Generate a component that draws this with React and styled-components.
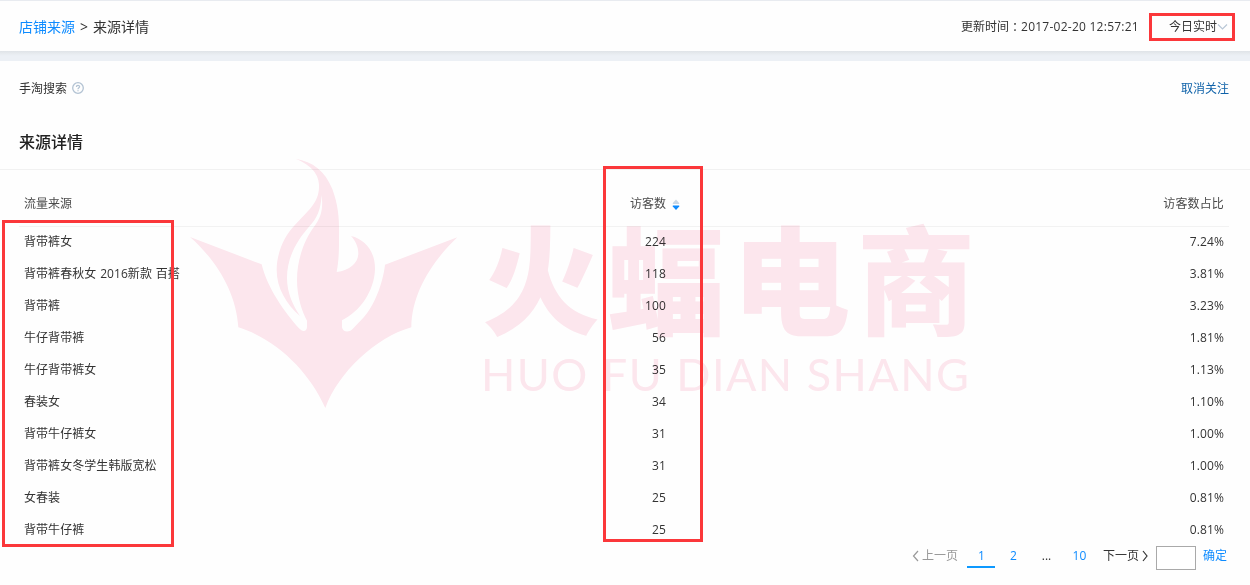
import React from "react";
import styled, { createGlobalStyle } from "styled-components";

const GlobalStyle = createGlobalStyle`
  * { box-sizing: border-box; }
  body {
    margin: 0;
    background: #fefefe;
    color: #333;
    font-family: "Open Sans", "Noto Sans CJK SC", sans-serif;
    font-size: 12px;
    line-height: 18px;
  }
`;

const Page = styled.div`
  position: relative;
  width: 1250px;
  height: 585px;
  overflow: hidden;
  background: #fefefe;
`;

const Header = styled.header`
  display: flex;
  align-items: center;
  justify-content: space-between;
  height: 51px;
  padding: 1px 22px 0 19px;
  border-top: 1px solid #e8ebf0;
`;

const Breadcrumb = styled.nav`
  display: flex;
  gap: 5px;
  font-size: 14px;
  line-height: 20px;
`;

const CrumbLink = styled.a`
  color: #0d8bff;
`;

const HeaderTools = styled.div`
  display: flex;
  align-items: center;
`;

const UpdateTime = styled.span`
  display: flex;
  margin-right: 30px;
`;

const Colon = styled.span`
  font-family: "Noto Sans CJK TC", sans-serif;
`;

const Timestamp = styled.time`
  letter-spacing: 0.25px;
`;

const RangeSelect = styled.span`
  display: flex;
  align-items: center;
`;

const Divider = styled.div`
  height: 10px;
  background: linear-gradient(#dfe3e7 0, #e8ecf0 3px, #ecf0f5 5px);
`;

const SourceBar = styled.div`
  display: flex;
  align-items: center;
  justify-content: space-between;
  height: 54px;
  padding: 2px 21px 0 19px;
`;

const SourceName = styled.span`
  display: flex;
  align-items: center;
  gap: 5px;
`;

const HelpMark = styled.svg`
  margin-bottom: 2px;
`;

const Unfollow = styled.a`
  color: #0f62a9;
`;

const SectionTitle = styled.h2`
  height: 55px;
  margin: 0;
  padding: 15px 19px 0;
  border-bottom: 1px solid #f1f1f1;
  color: #222;
  font-size: 16px;
  font-weight: 500;
  line-height: 24px;
`;

const Table = styled.div`
  padding: 0 21px 0 19px;
`;

const Row = styled.div`
  display: grid;
  grid-template-columns: 560px 92px 1fr;
  align-items: start;
  height: 32px;
  line-height: 30px;
`;

const HeadRow = styled(Row)`
  height: 57px;
  padding-top: 19px;
  border-bottom: 1px solid #f2f2f2;
  color: #4a4a4a;
`;

const Cell = styled.div`
  padding: 0 5px;
  white-space: nowrap;
  text-align: ${(p) => (p.$numeric ? "right" : "left")};
  letter-spacing: ${(p) => (p.$numeric ? "0.14px" : "normal")};
`;

const NameCell = styled(Cell)`
  word-spacing: 0.6px;
  letter-spacing: 0.06px;
`;

const SortHead = styled(Cell)`
  display: flex;
  align-items: center;
  justify-content: flex-end;
  letter-spacing: normal;
`;

const SortIcon = styled.svg`
  flex: none;
  margin: 1px -14px 0 6px;
`;

const Pager = styled.div`
  display: flex;
  align-items: flex-start;
  height: 24px;
  margin-top: -1px;
  padding-right: 23px;
  justify-content: flex-end;
  line-height: 20px;
`;

const PagerStep = styled.span`
  display: flex;
  align-items: center;
  gap: 3px;
  margin-left: ${(p) => p.$gap || 0}px;
  white-space: nowrap;
  color: ${(p) => (p.$disabled ? "#999" : "#333")};
`;

const PageNumber = styled.span`
  width: 28px;
  height: 22px;
  margin-left: ${(p) => p.$gap}px;
  padding-left: 1px;
  border-bottom: 2px solid ${(p) => (p.$active ? "#0d99ff" : "transparent")};
  color: ${(p) => (p.$plain ? "#333" : "#0d8bff")};
  text-align: center;
`;

const PageInput = styled.input`
  width: 40px;
  height: 24px;
  margin: 0 7px 0 8px;
  border: 1px solid #a9a9a9;
  background: #fff;
`;

const Confirm = styled.a`
  color: #0d8bff;
`;

const Watermark = styled.div`
  position: absolute;
  inset: 0;
  color: #fde7ee;
  mix-blend-mode: multiply;
  pointer-events: none;
`;

const Emblem = styled.svg`
  position: absolute;
  left: 180px;
  top: 150px;
`;

const BrandName = styled.div`
  position: absolute;
  left: 482px;
  top: 205px;
  font: 900 118px/140px "Noto Sans CJK SC", sans-serif;
  letter-spacing: 7px;
  white-space: nowrap;
`;

const BrandLatin = styled.div`
  position: absolute;
  left: 481px;
  top: 347px;
  font: 400 45px/54px Lato, sans-serif;
  letter-spacing: 1.45px;
  white-space: nowrap;
`;

const Highlight = styled.div`
  position: absolute;
  left: ${(p) => p.$x}px;
  top: ${(p) => p.$y}px;
  width: ${(p) => p.$w}px;
  height: ${(p) => p.$h}px;
  border: 3px solid #fb373a;
  pointer-events: none;
`;

const rows = [
  ["背带裤女", "224", "7.24%"],
  ["背带裤春秋女 2016新款 百搭", "118", "3.81%"],
  ["背带裤", "100", "3.23%"],
  ["牛仔背带裤", "56", "1.81%"],
  ["牛仔背带裤女", "35", "1.13%"],
  ["春装女", "34", "1.10%"],
  ["背带牛仔裤女", "31", "1.00%"],
  ["背带裤女冬学生韩版宽松", "31", "1.00%"],
  ["女春装", "25", "0.81%"],
  ["背带牛仔裤", "25", "0.81%"],
];

const Chevron = ({ d, w, h, color }) => (
  <svg width={w} height={h} viewBox={`0 0 ${w} ${h}`} fill="none" stroke={color} strokeWidth="1.2">
    <path d={d} />
  </svg>
);

const HelpIcon = () => (
  <HelpMark width="12" height="12" viewBox="0 0 12 12" fill="none" stroke="#b3c3d3">
    <circle cx="6" cy="6" r="5.3" strokeWidth="1.3" />
    <path d="M4.4 4.9C4.4 2.9 7.6 2.9 7.6 4.7C7.6 5.8 6 5.8 6 7.2M6 8.2V9.3" strokeWidth="1.3" />
  </HelpMark>
);

export default function App() {
  return (
    <Page>
      <GlobalStyle />
      <Header>
        <Breadcrumb>
          <CrumbLink>店铺来源</CrumbLink>
          <span>&gt;</span>
          <span>来源详情</span>
        </Breadcrumb>
        <HeaderTools>
          <UpdateTime>
            更新时间<Colon lang="zh-TW">：</Colon>
            <Timestamp>2017-02-20 12:57:21</Timestamp>
          </UpdateTime>
          <RangeSelect>
            今日实时
            <Chevron w={11} h={8} color="#b9c7d6" d="M1 1.5L5.5 6L10 1.5" />
          </RangeSelect>
        </HeaderTools>
      </Header>
      <Divider />
      <SourceBar>
        <SourceName>
          手淘搜索
          <HelpIcon />
        </SourceName>
        <Unfollow>取消关注</Unfollow>
      </SourceBar>
      <SectionTitle>来源详情</SectionTitle>
      <Table>
        <HeadRow>
          <Cell>流量来源</Cell>
          <SortHead>
            访客数
            <SortIcon width="8" height="12" viewBox="0 0 8 12">
              <path d="M4 0.5L7.2 4V5H0.8V4Z" fill="#c9d7e5" />
              <path d="M0.8 6.5H7.2V7.5L4 11L0.8 7.5Z" fill="#0d8bff" />
            </SortIcon>
          </SortHead>
          <Cell $numeric>访客数占比</Cell>
        </HeadRow>
        {rows.map(([name, visitors, share]) => (
          <Row key={name}>
            <NameCell>{name}</NameCell>
            <Cell $numeric>{visitors}</Cell>
            <Cell $numeric>{share}</Cell>
          </Row>
        ))}
      </Table>
      <Pager>
        <PagerStep $disabled>
          <Chevron w={7} h={12} color="#999" d="M6 1L1.5 6L6 11" />
          上一页
        </PagerStep>
        <PageNumber $active $gap={9}>1</PageNumber>
        <PageNumber $gap={4}>2</PageNumber>
        <PageNumber $plain $gap={5}>...</PageNumber>
        <PageNumber $gap={5}>10</PageNumber>
        <PagerStep $gap={10}>
          下一页
          <Chevron w={6} h={12} color="#333" d="M1 1L5 6L1 11" />
        </PagerStep>
        <PageInput aria-label="页码" />
        <Confirm>确定</Confirm>
      </Pager>
      <Watermark>
        <Emblem width="290" height="270" viewBox="0 0 870 810" fill="currentColor">
          <path d="M30 261L245 343C262 415 315 488 357 535C366 545 380 547 381 531V512C366 485 351 440 351 390C351 320 379 262 401 232C426 200 429 174 425 135C422 180 412 204 387 230C353 269 321 320 321 384C321 430 340 468 360 498C319 463 290 414 290 360C290 307 314 257 344 226C384 181 419 158 417 105C416 65 384 42 347 26C398 35 435 62 457 117C481 181 477 231 477 275C477 314 475 339 470 366C510 361 535 338 535 310C535 291 526 272 513 258C556 268 586 305 585 358C583 424 539 486 486 511V532C488 546 506 549 517 538L550 503C582 469 609 400 615 344L832 262C759 331 695 427 694 532C588 562 475 667 436 774C388 665 289 567 175 532C169 423 104 326 30 261Z" />
        </Emblem>
        <BrandName>火蝠电商</BrandName>
        <BrandLatin>HUO FU DIAN SHANG</BrandLatin>
      </Watermark>
      <Highlight $x={1149} $y={13} $w={86} $h={28} />
      <Highlight $x={2} $y={220} $w={172} $h={327} />
      <Highlight $x={603} $y={166} $w={100} $h={376} />
    </Page>
  );
}
